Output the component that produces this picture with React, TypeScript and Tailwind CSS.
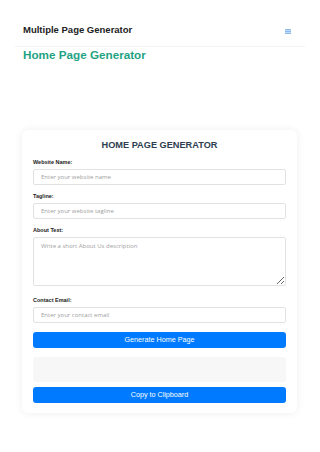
import React from "react"

const fields = [
  { label: "Website Name:", placeholder: "Enter your website name" },
  { label: "Tagline:", placeholder: "Enter your website tagline" },
]

function Label({ children }: { children: React.ReactNode }) {
  return (
    <label className="block text-[5.5px] leading-[7px] font-bold text-[#222] mb-[3px]">
      {children}
    </label>
  )
}

export default function App() {
  return (
    <div className="min-h-[452px] bg-white font-['Liberation_Sans',Arial,sans-serif]">
      {/* header */}
      <header className="mx-[15px] pt-[24px] pb-[10px] px-[8px] pr-[14px] flex items-center justify-between border-b border-[#f3f3f3]">
        <span className="text-[9.5px] leading-[12px] font-bold text-[#222]">Multiple Page Generator</span>
        <svg width="6" height="5" viewBox="0 0 6 5" className="mt-[3px]">
          <rect x="0" y="0" width="6" height="1.4" fill="#8dbaee" />
          <rect x="0" y="1.8" width="6" height="1.4" fill="#8dbaee" />
          <rect x="0" y="3.6" width="6" height="1.4" fill="#8dbaee" />
        </svg>
      </header>

      <h1 className="ml-[23px] mt-[1px] text-[11.7px] leading-[14px] font-bold text-[#1fa383]">
        Home Page Generator
      </h1>

      {/* generator card */}
      <div className="ml-[22px] mr-[23px] mt-[68px] bg-white rounded-[6px] shadow-[0_0_8px_rgba(0,0,0,0.07)] px-[11px] pt-[10px] pb-[10px]">
        <h2 className="text-center text-[9.2px] leading-[11px] font-bold text-[#2c3e50] mb-[8px]">
          HOME PAGE GENERATOR
        </h2>

        <div className="flex flex-col gap-[8px]">
          {fields.map((f) => (
            <div key={f.label}>
              <Label>{f.label}</Label>
              <input
                placeholder={f.placeholder}
                className="block w-full h-[16px] px-[7px] border border-[#e2e2e2] rounded-[2px] text-[6px] font-['Open_Sans',sans-serif] placeholder:text-[#a0a0a0] outline-none"
              />
            </div>
          ))}

          <div>
            <Label>About Text:</Label>
            <textarea
              placeholder="Write a short About Us description"
              className="block w-full h-[49px] px-[7px] py-[4px] border border-[#e2e2e2] rounded-[2px] text-[6px] leading-[8px] font-['Open_Sans',sans-serif] placeholder:text-[#a0a0a0] outline-none"
            />
          </div>

          <div className="mt-[3px]">
            <Label>Contact Email:</Label>
            <input
              placeholder="Enter your contact email"
              className="block w-full h-[16px] px-[7px] border border-[#e2e2e2] rounded-[2px] text-[6px] font-['Open_Sans',sans-serif] placeholder:text-[#a0a0a0] outline-none"
            />
          </div>
        </div>

        <button className="mt-[9px] block w-full h-[16px] rounded-[3px] bg-[#007bff] text-white text-[7.2px]">
          Generate Home Page
        </button>

        <div className="mt-[9px] h-[25px] rounded-[3px] bg-[#f7f7f7]" />

        <button className="mt-[5px] block w-full h-[16px] rounded-[3px] bg-[#007bff] text-white text-[7.2px]">
          Copy to Clipboard
        </button>
      </div>
    </div>
  )
}
